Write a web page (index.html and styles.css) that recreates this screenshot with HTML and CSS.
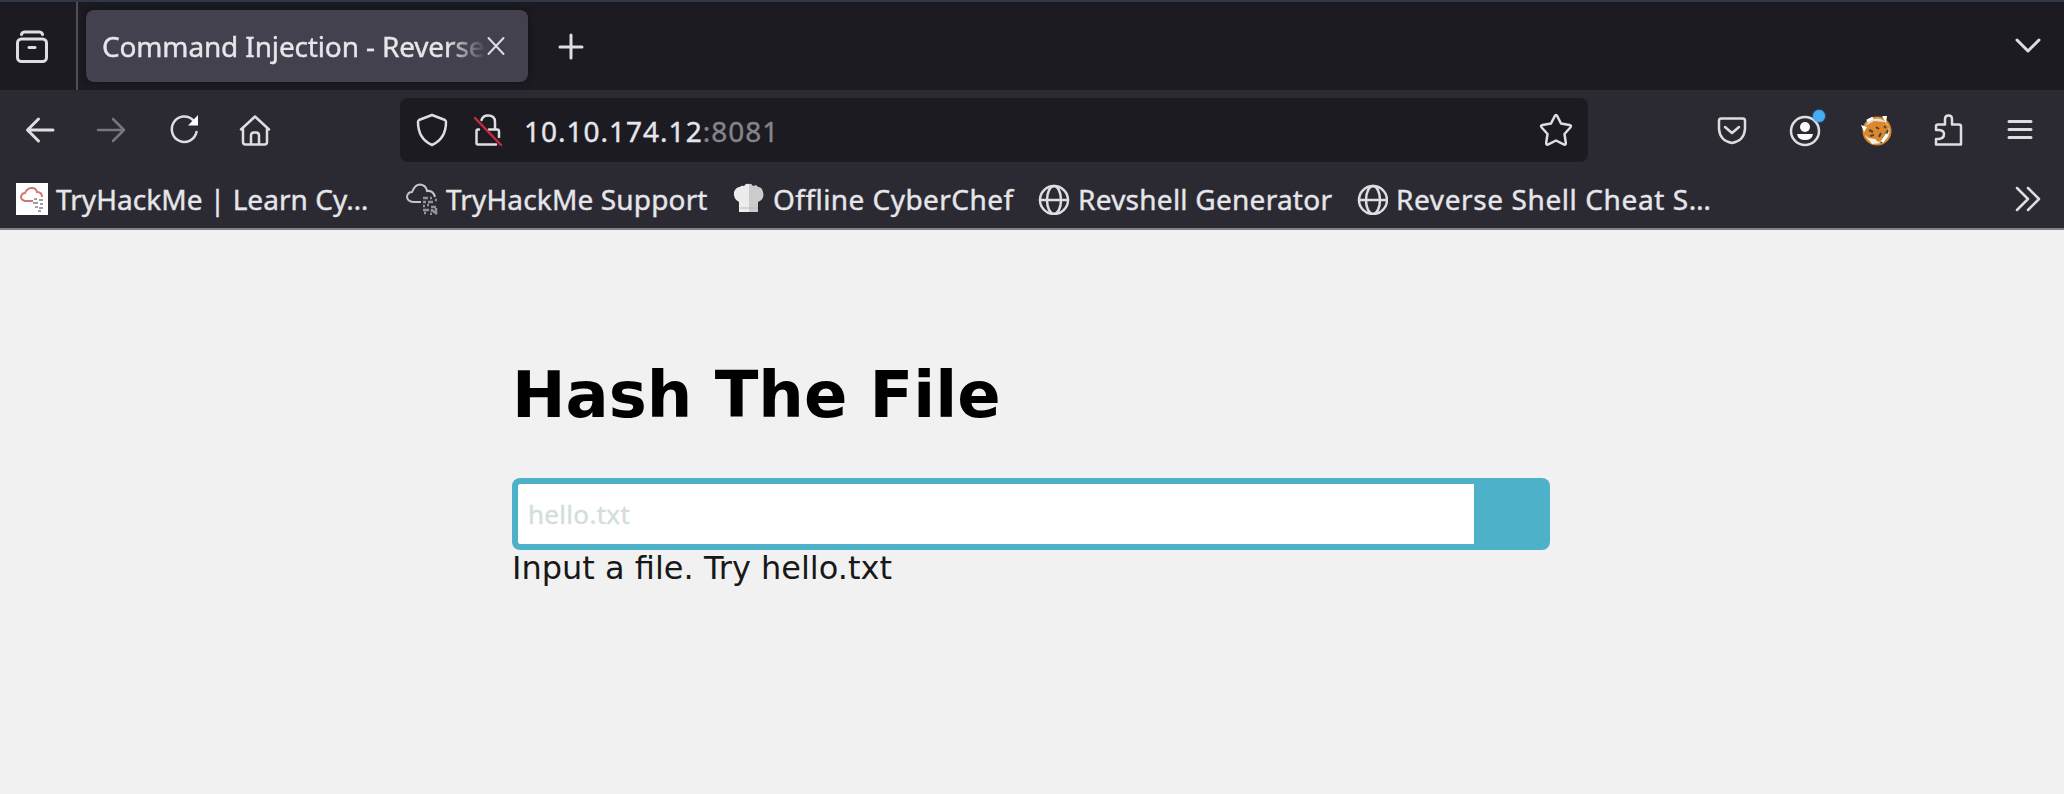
FILE: index.html
```html
<!DOCTYPE html>
<html lang="en">
<head>
<meta charset="utf-8">
<title>Command Injection - Reverse Shell</title>
<link rel="stylesheet" href="styles.css">
</head>
<body>
<header class="browser">
  <div class="tabs">
    <div class="archive"><svg class="icon bold" width="34" height="36" viewBox="0 0 34 36"><path d="M6.500 5.500Q7 3 10 3H24Q27 3 27.500 5.500"/><rect x="2.500" y="10" width="29" height="22.500" rx="4"/><path d="M14 18.500H20"/></svg></div>
    <div class="tab"><span class="tab-title">Command Injection - Reverse</span><svg class="icon thin" width="20" height="20" viewBox="0 0 20 20"><path d="M2.500 2L17.500 18M17.500 2L2.500 18"/></svg></div>
    <svg class="icon bold new-tab" width="28" height="28" viewBox="0 0 28 28"><path d="M14 3V26M3 15H25"/></svg>
    <svg class="icon bold all-tabs" width="28" height="18" viewBox="0 0 28 18"><path d="M3 3L14 14L25 3"/></svg>
  </div>
  <nav class="toolbar">
    <div class="nav-icons">
      <svg class="icon bold" viewBox="0 0 36 36"><path d="M31 18H6M16.500 7L5.500 18L16.500 29"/></svg>
      <svg class="icon dim" viewBox="0 0 36 36"><path d="M4 18H30M19 7L30 18L19 29"/></svg>
      <svg class="icon" viewBox="0 0 36 36"><path d="M27 8A12.500 12.800 0 1 0 30.500 20"/><path class="fill plain" d="M32 3V13.500H22Z"/></svg>
      <svg class="icon" viewBox="0 0 36 36"><path d="M3 17.500L17 4.500L31 17.500M5 16V30Q5 32.500 7.500 32.500H26.500Q29 32.500 29 30V16M13 32V23.500Q13 20.500 16 20.500H18Q21 20.500 21 23.500V32"/></svg>
    </div>
    <div class="address">
      <svg class="icon shield" width="36" height="36" viewBox="0 0 36 36"><path d="M18 3L31 8Q32 8.500 32 10C32 21 28 28.500 18 33C8 28.500 4 21 4 10Q4 8.500 5 8Z"/></svg>
      <svg class="icon lock" width="36" height="36" viewBox="0 0 36 36"><path d="M11.500 8Q13 3.500 18 3.500Q25 3.500 25 10V17.500M9 17.500H8Q6.500 17.500 6.500 19V31Q6.500 32.500 8 32.500H26M19 17.500H27Q29 17.500 29 19.500V25"/><path class="red" d="M5 6L31 33"/></svg>
      <span class="url">10.10.174.12<span class="port">:8081</span></span>
      <svg class="icon star" width="36" height="36" viewBox="0 0 36 36"><path d="M16.800 4Q18 2 19.200 4L23 11.500L31.500 13Q34 13.600 32.300 15.500L26.500 22L27.800 30.800Q28 33.400 25.600 32.300L18 28.500L10.400 32.300Q8 33.400 8.200 30.800L9.500 22L3.700 15.500Q2 13.600 4.500 13L13 11.500Z"/></svg>
    </div>
    <div class="tool-icons">
      <svg class="icon" viewBox="0 0 36 36"><path d="M7 6.500H29Q31 6.500 31 9V17Q30 29 18 31Q6 29 5 17V9Q5 6.500 7 6.500ZM11 15L18 21L25 15"/></svg>
      <div class="account"><svg class="icon" viewBox="0 0 36 36"><circle cx="19" cy="19" r="14"/><circle class="fill plain" cx="19" cy="15" r="5"/><path class="fill plain" d="M11 22H27Q26 28 19 28Q12 28 11 22Z"/></svg><i class="dot"></i></div>
      <svg viewBox="0 0 36 36"><circle cx="19" cy="19" r="13.500" fill="#e6e0d5" stroke="#d9882b" stroke-width="2"/><path d="M7 14L16 9L27 10L31 15L29 24L21 30L13 28L6 22Z" fill="#db892b"/><path d="M3 13L9 15L6 20ZM24 4L29 4L28 11Z" fill="#fff"/><path d="M11 18L15 20M18 15L21 17M12 24L16 23M23 21L21 25M26 14L28 16M30 18L23 31" stroke="#4c433b" stroke-width="2"/><path d="M10 26L17 27L21 31L14 32Z" fill="#f6f1e4"/><path d="M29 22L24 30M9 9L15 6" stroke="#fff" stroke-width="3"/></svg>
      <svg class="icon" viewBox="0 0 36 36"><path d="M8 12.500H15V7Q15 3.500 18.500 3.500Q22 3.500 22 7V12.500H29Q31 12.500 31 14.500V32.500H6V27H9Q14 26.500 14 22Q14 18.500 9 18H6V14.500Q6 12.500 8 12.500Z"/></svg>
      <svg class="icon bold" viewBox="0 0 36 36"><path d="M7 9.500H29M7 17.500H29M7 25.500H29"/></svg>
    </div>
  </nav>
  <div class="bookmarks">
    <a class="bookmark b1"><svg class="thm" viewBox="0 0 32 32"><rect width="32" height="32" fill="#fff"/><path d="M17 18H9Q5 17 5 13.500Q6 10 9 10Q11 5 16 5Q20 5 21 9Q26 9 26 14" fill="none" stroke="#cf7776" stroke-width="2"/><path d="M18 16h3M23 17h4M17 20h5M24 21h3M19 24h3M23 25h4M22 28h3" stroke="#a99a9b" stroke-width="2"/></svg><span>TryHackMe | Learn Cy…</span></a>
    <a class="bookmark b2"><svg viewBox="0 0 32 32"><path d="M15 19H7Q1 18 1 13.500Q2 9 6 9Q9 1.500 14 1.500Q20 2 21 8Q27 7 29 14" fill="none" stroke="#c4c4c7" stroke-width="2"/><path d="M17 15h5M24 15h2M29 17h2M17 19h3M22 19h5M17 23h2M21 22h2M17 27h6M25 24h5M18 30h2M24 31h2M27 28l4 3M26 26v3M30 25v6" stroke="#929297" stroke-width="2.500"/></svg><span>TryHackMe Support</span></a>
    <a class="bookmark b3"><svg viewBox="0 0 32 32"><path d="M6 29V19Q0 16 1 9Q3 4 7 4Q8 2 11 3Q13 0 16 1V29Z" fill="#ececec"/><path d="M16 1Q18 0 20 3Q24 1 25 4Q29 4 30 9Q32 16 25 19V29H16Z" fill="#cbcbcb"/><path d="M7 25H25" stroke="#bbb"/></svg><span>Offline CyberChef</span></a>
    <a class="bookmark b4"><svg class="icon" viewBox="0 0 32 32"><circle cx="16" cy="17" r="14"/><ellipse cx="16" cy="17" rx="7" ry="14"/><path d="M2 17H30"/></svg><span>Revshell Generator</span></a>
    <a class="bookmark b5"><svg class="icon" viewBox="0 0 32 32"><circle cx="17" cy="17" r="14"/><ellipse cx="17" cy="17" rx="7" ry="14"/><path d="M3 17H31"/></svg><span>Reverse Shell Cheat S…</span></a>
    <svg class="icon overflow" width="30" height="28" viewBox="0 0 30 28"><path d="M4 3L15 14L4 25M15 3L26 14L15 25"/></svg>
  </div>
</header>
<main class="page">
  <h1 class="heading">Hash The File</h1>
  <form class="search"><input class="field" type="text" placeholder="hello.txt"><button class="submit" type="button" aria-label="Submit"></button></form>
  <p class="hint">Input a file. Try hello.txt</p>
</main>
</body>
</html>
```

FILE: styles.css
```css
* { box-sizing: border-box; }
body { margin: 0; background: #f1f1f1; font-family: "DejaVu Sans", sans-serif; overflow: hidden; }
svg { display: block; flex: none; }
.icon { fill: none; stroke: #dedee0; stroke-width: 2.5; stroke-linejoin: round; stroke-linecap: round; }
.thin { stroke-width: 2; }
.bold { stroke-width: 3; }
.dim { stroke: #77767b; }
.fill { fill: #fbfbfe; }
.plain { stroke: none; }
.red { stroke: #c92842; }
.browser { height: 230px; background: #2b2a33; border-bottom: 2px solid #83828b; color: #e6e6ea; font-family: "Noto Sans", "Open Sans", sans-serif; font-size: 28px; -webkit-text-stroke: 0.4px; }
.tabs { height: 90px; display: flex; align-items: center; background: #1c1b22; border-top: 2px solid #303746; }
.archive { width: 78px; height: 88px; padding: 27px 0 0 15px; border-right: 2px solid #504f56; }
.tab { width: 442px; height: 72px; margin-left: 8px; padding: 0 22px 0 16px; display: flex; align-items: center; justify-content: space-between; background: #42414d; border-radius: 8px; box-shadow: 0 0 6px #111017; }
.tab-title { width: 384px; flex: none; white-space: nowrap; letter-spacing: -0.15px; mask-image: linear-gradient(to right, #000 345px, transparent 384px); }
.new-tab { margin-left: 29px; }
.all-tabs { margin-left: auto; margin-right: 22px; }
.toolbar { height: 80px; display: flex; align-items: center; }
.nav-icons { width: 400px; display: flex; gap: 36px; padding-left: 22px; }
.nav-icons svg, .tool-icons svg { width: 36px; height: 36px; }
.address { width: 1188px; height: 64px; display: flex; align-items: center; padding: 0 14px; border-radius: 8px; background: #1c1b22; }
.lock { margin-left: 20px; }
.url { margin-left: 18px; padding-top: 1px; white-space: nowrap; letter-spacing: 1px; }
.port { color: #85848a; }
.star { margin-left: auto; }
.tool-icons { display: flex; gap: 36px; margin-left: 126px; }
.account { position: relative; }
.dot { position: absolute; right: -3px; top: -2px; width: 12px; height: 12px; border-radius: 50%; background: #45adf1; box-shadow: 0 0 2px #45adf1; }
.bookmarks { height: 58px; display: flex; align-items: center; padding: 0 21px 1px 16px; }
.bookmark { display: flex; align-items: center; gap: 8px; flex: none; white-space: nowrap; }
.bookmark svg { width: 32px; height: 32px; }
.b1 { width: 390px; letter-spacing: 0.05px; }
.b2 { width: 327px; letter-spacing: 0.15px; }
.b3 { width: 305px; letter-spacing: 0.45px; }
.b4 { width: 318px; letter-spacing: 0.25px; }
.b5 { letter-spacing: 0.6px; }
.overflow { margin-left: auto; }
.page { width: 1038px; margin-left: 512px; padding-top: 128px; }
.heading { margin: 0; height: 120px; font-size: 64px; line-height: 75px; white-space: nowrap; }
.search { display: flex; height: 72px; margin: 0; }
.field { width: 962px; border: 6px solid #4eb1ca; border-right: 0; border-radius: 8px 0 0 8px; padding: 0 10px; background: #fff; font: 26px "Noto Sans", sans-serif; letter-spacing: 0.3px; outline: 0; }
.field::placeholder { color: #d2dfd9; opacity: 1; -webkit-text-stroke: 0.4px; }
.submit { width: 76px; border: 0; border-radius: 0 8px 8px 0; background: #4eb1ca; }
.hint { margin: 0; font-size: 32px; line-height: 37px; color: #181818; white-space: nowrap; }
```
